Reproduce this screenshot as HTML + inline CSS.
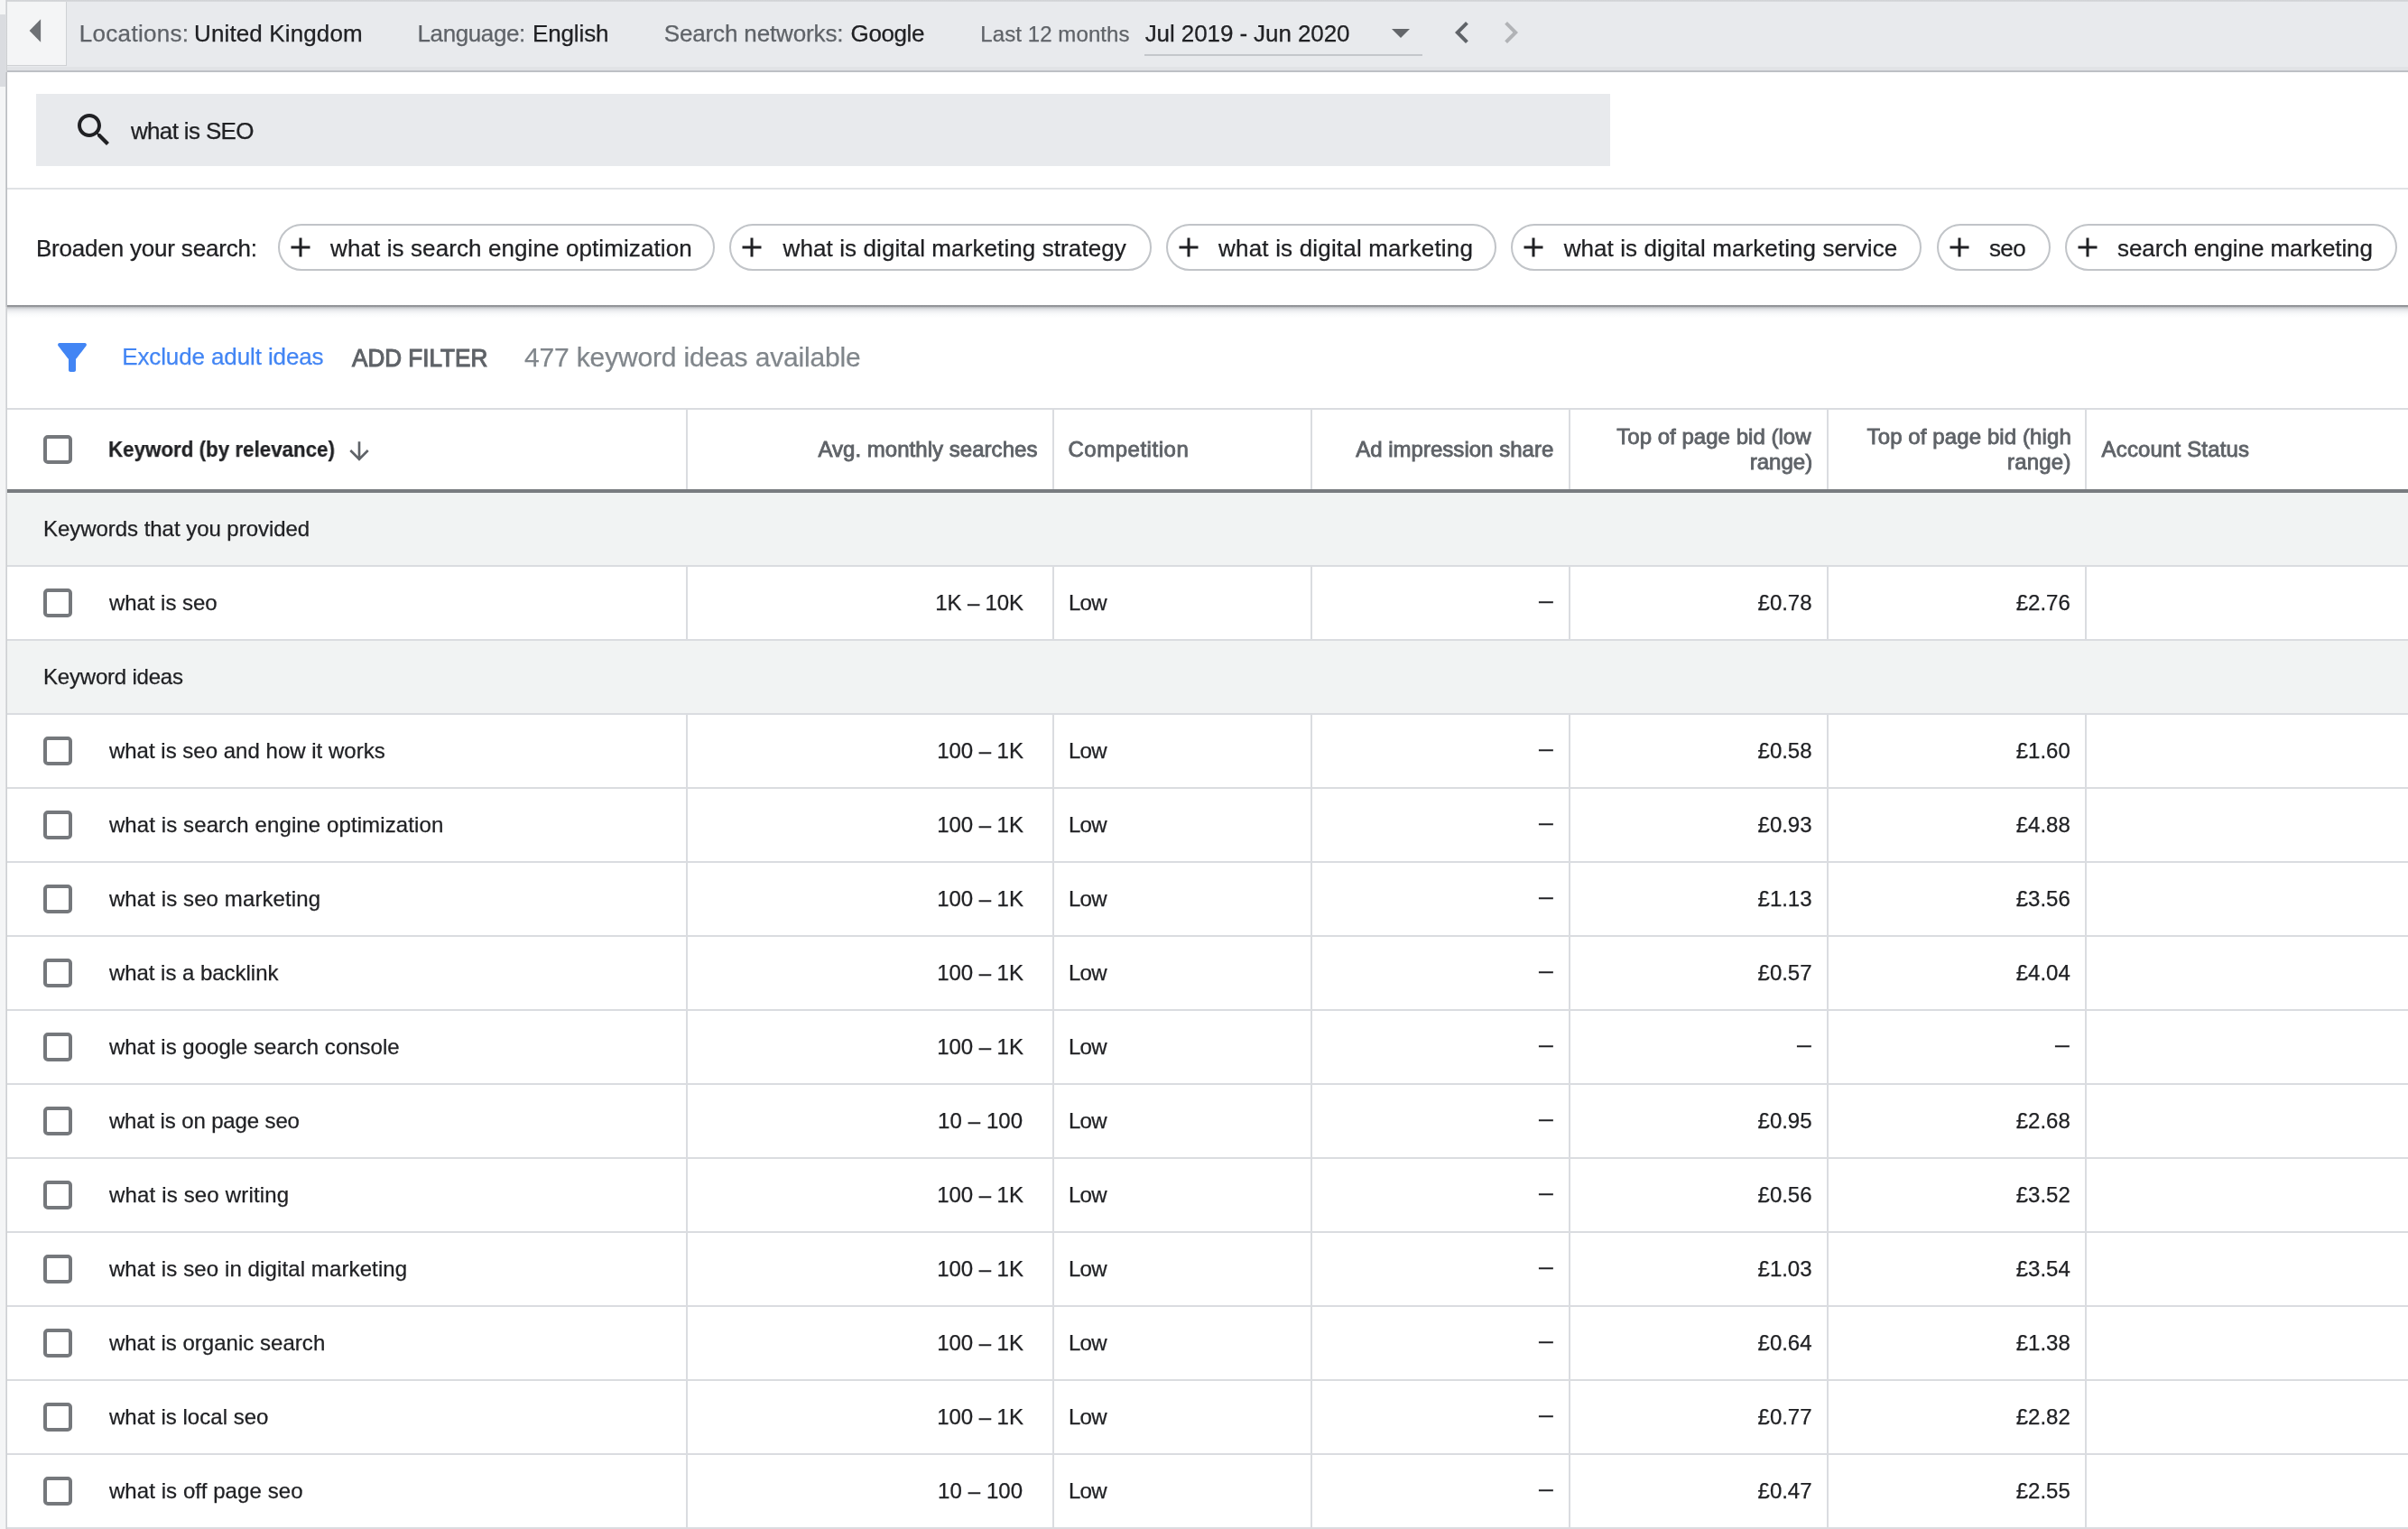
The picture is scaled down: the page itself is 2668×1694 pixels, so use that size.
<!DOCTYPE html>
<html lang="en"><head><meta charset="utf-8"><title>Keyword ideas</title><style>
html,body{margin:0;padding:0;background:#fff}
body{width:2668px;height:1694px;position:relative;overflow:hidden;font-family:"Liberation Sans",Arial,sans-serif}
#app{position:absolute;left:0;top:0;width:2668px;height:1694px;will-change:transform;transform:translateZ(0)}
.t{position:absolute;white-space:pre;-webkit-text-stroke:0.25px currentColor;line-height:1;margin:0;padding:0}
.cb{position:absolute;left:48px;width:32px;height:32px;box-sizing:border-box;border:4px solid #75787c;border-radius:5px;background:#fff}
</style></head><body><div id="app">
<aside class="rail">
<div style="position:absolute;left:0;top:0;width:6px;height:1694px;background:#f4f5f6"></div>
<div style="position:absolute;left:0;top:16px;width:6px;height:80px;background:#dadce0"></div>
<div style="position:absolute;left:6px;top:0;width:2px;height:1694px;background:linear-gradient(90deg,#e3e5e7,#c6c8cb)"></div>
<div style="position:absolute;left:6px;top:80px;width:2px;height:260px;background:linear-gradient(90deg,#d5d7da,#b2b5b9)"></div>
</aside>
<header class="topbar">
<div style="position:absolute;left:8px;top:0;width:2660px;height:78px;background:#e8eaed"></div>
<div style="position:absolute;left:8px;top:0;width:2660px;height:2px;background:linear-gradient(#cfd1d4,#dadcdf)"></div>
<div style="position:absolute;left:8px;top:74px;width:2660px;height:4px;background:#e1e3e6"></div>
<div style="position:absolute;left:8px;top:78px;width:2660px;height:2px;background:#bdc0c5"></div>
<div style="position:absolute;left:8px;top:2px;width:65px;height:70px;background:#f4f5f6;border-right:1px solid #cfd1d4;border-bottom:1px solid #cfd1d4"></div>
<svg style="position:absolute;left:28px;top:16px" width="24" height="36" viewBox="0 0 24 36"><path d="M17.1 5.2 L17.1 30.7 L4.6 18 Z" fill="#6e7175"/></svg>
<div style="position:absolute;left:1268px;top:60px;width:308px;height:2px;background:#c4c7cb"></div>
<svg style="position:absolute;left:1528px;top:12px" width="48" height="48" viewBox="0 0 24 24"><path d="M7 10l5 5 5-5z" fill="#63666a"/></svg>
<svg style="position:absolute;left:1595.8px;top:12.3px" width="48" height="48" viewBox="0 0 24 24"><path d="M15.41 7.41L14 6l-6 6 6 6 1.41-1.41L10.83 12z" fill="#5f6368"/></svg>
<svg style="position:absolute;left:1650.4px;top:12.3px" width="48" height="48" viewBox="0 0 24 24"><path d="M10 6L8.59 7.41 13.17 12l-4.58 4.59L10 18l6-6z" fill="#b1b3b6"/></svg>
<div class="t" style="left:87.80px;top:24px;font-size:26px;color:#5f6368;letter-spacing:0.300px;">Locations:</div>
<div class="t" style="left:215.00px;top:24px;font-size:26px;color:#202124;letter-spacing:0.128px;">United Kingdom</div>
<div class="t" style="left:462.50px;top:24px;font-size:26px;color:#5f6368;letter-spacing:-0.397px;">Language:</div>
<div class="t" style="left:590.00px;top:24px;font-size:26px;color:#202124;letter-spacing:-0.136px;">English</div>
<div class="t" style="left:735.70px;top:24px;font-size:26px;color:#5f6368;letter-spacing:-0.136px;">Search networks:</div>
<div class="t" style="left:942.60px;top:24px;font-size:26px;color:#202124;letter-spacing:-0.396px;">Google</div>
<div class="t" style="left:1086.30px;top:26px;font-size:24px;color:#5f6368;letter-spacing:0.085px;">Last 12 months</div>
<div class="t" style="left:1268.70px;top:24px;font-size:26px;color:#202124;letter-spacing:-0.090px;">Jul 2019 - Jun 2020</div>
</header>
<section class="search-panel">
<div style="position:absolute;left:40px;top:104px;width:1744px;height:80px;background:#e8eaed"></div>
<svg style="position:absolute;left:80px;top:120px" width="48" height="48" viewBox="0 0 24 24"><path fill="#202124" d="M15.5 14h-.79l-.28-.27C15.41 12.59 16 11.11 16 9.5 16 5.91 13.09 3 9.5 3S3 5.91 3 9.5 5.91 16 9.5 16c1.61 0 3.09-.59 4.23-1.57l.27.28v.79l5 4.99L20.49 19l-4.99-5zm-6 0C7.01 14 5 11.99 5 9.5S7.01 5 9.5 5 14 7.01 14 9.5 11.99 14 9.5 14z"/></svg>
<div style="position:absolute;left:8px;top:208px;width:2660px;height:2px;background:#e0e2e5"></div>
<div style="position:absolute;left:308.0px;top:248px;width:483.8px;height:52px;box-sizing:border-box;border:2px solid #c1c4c8;border-radius:26px"></div>
<svg style="position:absolute;left:315.2px;top:256px" width="36" height="36" viewBox="0 0 24 24"><path fill="#202124" d="M19 13h-6v6h-2v-6H5v-2h6V5h2v6h6v2z"/></svg>
<div style="position:absolute;left:808.0px;top:248px;width:467.8px;height:52px;box-sizing:border-box;border:2px solid #c1c4c8;border-radius:26px"></div>
<svg style="position:absolute;left:815.2px;top:256px" width="36" height="36" viewBox="0 0 24 24"><path fill="#202124" d="M19 13h-6v6h-2v-6H5v-2h6V5h2v6h6v2z"/></svg>
<div style="position:absolute;left:1292.0px;top:248px;width:366.1px;height:52px;box-sizing:border-box;border:2px solid #c1c4c8;border-radius:26px"></div>
<svg style="position:absolute;left:1299.2px;top:256px" width="36" height="36" viewBox="0 0 24 24"><path fill="#202124" d="M19 13h-6v6h-2v-6H5v-2h6V5h2v6h6v2z"/></svg>
<div style="position:absolute;left:1673.7px;top:248px;width:455.8px;height:52px;box-sizing:border-box;border:2px solid #c1c4c8;border-radius:26px"></div>
<svg style="position:absolute;left:1680.9px;top:256px" width="36" height="36" viewBox="0 0 24 24"><path fill="#202124" d="M19 13h-6v6h-2v-6H5v-2h6V5h2v6h6v2z"/></svg>
<div style="position:absolute;left:2146.0px;top:248px;width:126.0px;height:52px;box-sizing:border-box;border:2px solid #c1c4c8;border-radius:26px"></div>
<svg style="position:absolute;left:2153.2px;top:256px" width="36" height="36" viewBox="0 0 24 24"><path fill="#202124" d="M19 13h-6v6h-2v-6H5v-2h6V5h2v6h6v2z"/></svg>
<div style="position:absolute;left:2288.1px;top:248px;width:367.6px;height:52px;box-sizing:border-box;border:2px solid #c1c4c8;border-radius:26px"></div>
<svg style="position:absolute;left:2295.3px;top:256px" width="36" height="36" viewBox="0 0 24 24"><path fill="#202124" d="M19 13h-6v6h-2v-6H5v-2h6V5h2v6h6v2z"/></svg>
<div style="position:absolute;left:8px;top:338px;width:2660px;height:14px;background:linear-gradient(#8f9195 0,#94969a 1.6px,#c3c5c8 2.6px,#dfe1e4 4.5px,#eff0f2 7px,#f9fafb 10px,#fff 14px)"></div>
<div class="t" style="left:144.90px;top:132px;font-size:26px;color:#202124;letter-spacing:-0.643px;">what is SEO</div>
<div class="t" style="left:39.90px;top:262px;font-size:26px;color:#202124;letter-spacing:-0.182px;">Broaden your search:</div>
<div class="t" style="left:366.10px;top:262px;font-size:26px;color:#202124;letter-spacing:0.095px;">what is search engine optimization</div>
<div class="t" style="left:867.60px;top:262px;font-size:26px;color:#202124;letter-spacing:0.092px;">what is digital marketing strategy</div>
<div class="t" style="left:1350.10px;top:262px;font-size:26px;color:#202124;letter-spacing:0.179px;">what is digital marketing</div>
<div class="t" style="left:1732.70px;top:262px;font-size:26px;color:#202124;letter-spacing:0.079px;">what is digital marketing service</div>
<div class="t" style="left:2204.00px;top:262px;font-size:26px;color:#202124;letter-spacing:-0.630px;">seo</div>
<div class="t" style="left:2346.00px;top:262px;font-size:26px;color:#202124;letter-spacing:-0.080px;">search engine marketing</div>
</section>
<section class="filter-bar">
<svg style="position:absolute;left:56px;top:372px" width="48" height="48" viewBox="0 0 24 24"><path fill="#4285f4" d="M4.25 5.61C6.27 8.2 10 13 10 13v6c0 .55.45 1 1 1h2c.55 0 1-.45 1-1v-6s3.72-4.8 5.74-7.39A.998.998 0 0 0 18.95 4H5.04c-.83 0-1.3.95-.79 1.61z"/></svg>
<div class="t" style="left:135.20px;top:382px;font-size:26px;color:#4285f4;letter-spacing:-0.116px;">Exclude adult ideas</div>
<div class="t" style="left:390.30px;top:383px;font-size:28px;color:#5f6368;letter-spacing:0.000px;transform:scaleX(0.9316);transform-origin:0 0;-webkit-text-stroke:1.1px #5f6368;">ADD FILTER</div>
<div class="t" style="left:581.00px;top:381px;font-size:30px;color:#80868b;letter-spacing:-0.158px;">477 keyword ideas available</div>
</section>
<main class="keyword-table">
<div style="position:absolute;left:8px;top:452px;width:2660px;height:2px;background:#dadce0"></div>
<div style="position:absolute;left:8px;top:542px;width:2660px;height:4px;background:#797c80"></div>
<div style="position:absolute;left:8px;top:546px;width:2660px;height:80px;background:#f1f3f3"></div>
<div style="position:absolute;left:8px;top:710px;width:2660px;height:80px;background:#f1f3f3"></div>
<div style="position:absolute;left:8px;top:626px;width:2660px;height:2px;background:#dadce0"></div>
<div style="position:absolute;left:8px;top:708px;width:2660px;height:2px;background:#dadce0"></div>
<div style="position:absolute;left:8px;top:790px;width:2660px;height:2px;background:#dadce0"></div>
<div style="position:absolute;left:8px;top:872px;width:2660px;height:2px;background:#dadce0"></div>
<div style="position:absolute;left:8px;top:954px;width:2660px;height:2px;background:#dadce0"></div>
<div style="position:absolute;left:8px;top:1036px;width:2660px;height:2px;background:#dadce0"></div>
<div style="position:absolute;left:8px;top:1118px;width:2660px;height:2px;background:#dadce0"></div>
<div style="position:absolute;left:8px;top:1200px;width:2660px;height:2px;background:#dadce0"></div>
<div style="position:absolute;left:8px;top:1282px;width:2660px;height:2px;background:#dadce0"></div>
<div style="position:absolute;left:8px;top:1364px;width:2660px;height:2px;background:#dadce0"></div>
<div style="position:absolute;left:8px;top:1446px;width:2660px;height:2px;background:#dadce0"></div>
<div style="position:absolute;left:8px;top:1528px;width:2660px;height:2px;background:#dadce0"></div>
<div style="position:absolute;left:8px;top:1610px;width:2660px;height:2px;background:#dadce0"></div>
<div style="position:absolute;left:8px;top:1692px;width:2660px;height:2px;background:#dadce0"></div>
<div style="position:absolute;left:760px;top:454px;width:2px;height:88px;background:#dadce0"></div>
<div style="position:absolute;left:760px;top:628px;width:2px;height:80px;background:#dadce0"></div>
<div style="position:absolute;left:760px;top:792px;width:2px;height:902px;background:#dadce0"></div>
<div style="position:absolute;left:1166px;top:454px;width:2px;height:88px;background:#dadce0"></div>
<div style="position:absolute;left:1166px;top:628px;width:2px;height:80px;background:#dadce0"></div>
<div style="position:absolute;left:1166px;top:792px;width:2px;height:902px;background:#dadce0"></div>
<div style="position:absolute;left:1452px;top:454px;width:2px;height:88px;background:#dadce0"></div>
<div style="position:absolute;left:1452px;top:628px;width:2px;height:80px;background:#dadce0"></div>
<div style="position:absolute;left:1452px;top:792px;width:2px;height:902px;background:#dadce0"></div>
<div style="position:absolute;left:1738px;top:454px;width:2px;height:88px;background:#dadce0"></div>
<div style="position:absolute;left:1738px;top:628px;width:2px;height:80px;background:#dadce0"></div>
<div style="position:absolute;left:1738px;top:792px;width:2px;height:902px;background:#dadce0"></div>
<div style="position:absolute;left:2024px;top:454px;width:2px;height:88px;background:#dadce0"></div>
<div style="position:absolute;left:2024px;top:628px;width:2px;height:80px;background:#dadce0"></div>
<div style="position:absolute;left:2024px;top:792px;width:2px;height:902px;background:#dadce0"></div>
<div style="position:absolute;left:2310px;top:454px;width:2px;height:88px;background:#dadce0"></div>
<div style="position:absolute;left:2310px;top:628px;width:2px;height:80px;background:#dadce0"></div>
<div style="position:absolute;left:2310px;top:792px;width:2px;height:902px;background:#dadce0"></div>
<svg style="position:absolute;left:382px;top:483.6px" width="32" height="32" viewBox="0 0 24 24"><path d="M20 12l-1.41-1.41L13 16.17V4h-2v12.17l-5.58-5.59L4 12l8 8 8-8z" fill="#5f6368"/></svg>
<div class="cb" style="top:482px"></div>
<div class="cb" style="top:652px"></div>
<div class="cb" style="top:816px"></div>
<div class="cb" style="top:898px"></div>
<div class="cb" style="top:980px"></div>
<div class="cb" style="top:1062px"></div>
<div class="cb" style="top:1144px"></div>
<div class="cb" style="top:1226px"></div>
<div class="cb" style="top:1308px"></div>
<div class="cb" style="top:1390px"></div>
<div class="cb" style="top:1472px"></div>
<div class="cb" style="top:1554px"></div>
<div class="cb" style="top:1636px"></div>
<div class="t" style="left:120.47px;top:486px;font-size:24px;color:#202124;letter-spacing:0.000px;font-weight:700;transform:scaleX(0.9314);transform-origin:0 0;">Keyword (by relevance)</div>
<div class="t" style="left:906.40px;top:486px;font-size:24px;color:#5f6368;letter-spacing:0.033px;-webkit-text-stroke:0.85px #5f6368;">Avg. monthly searches</div>
<div class="t" style="left:1183.40px;top:486px;font-size:24px;color:#5f6368;letter-spacing:0.529px;-webkit-text-stroke:0.85px #5f6368;">Competition</div>
<div class="t" style="left:1502.20px;top:486px;font-size:24px;color:#5f6368;letter-spacing:0.016px;-webkit-text-stroke:0.85px #5f6368;">Ad impression share</div>
<div class="t" style="left:1791.30px;top:472px;font-size:24px;color:#5f6368;letter-spacing:0.022px;-webkit-text-stroke:0.85px #5f6368;">Top of page bid (low</div>
<div class="t" style="left:1938.70px;top:500px;font-size:24px;color:#5f6368;letter-spacing:0.023px;-webkit-text-stroke:0.85px #5f6368;">range)</div>
<div class="t" style="left:2068.60px;top:472px;font-size:24px;color:#5f6368;letter-spacing:0.099px;-webkit-text-stroke:0.85px #5f6368;">Top of page bid (high</div>
<div class="t" style="left:2224.00px;top:500px;font-size:24px;color:#5f6368;letter-spacing:0.203px;-webkit-text-stroke:0.85px #5f6368;">range)</div>
<div class="t" style="left:2328.60px;top:486px;font-size:24px;color:#5f6368;letter-spacing:0.152px;-webkit-text-stroke:0.85px #5f6368;">Account Status</div>
<div class="t" style="left:48.00px;top:574px;font-size:24px;color:#202124;letter-spacing:-0.041px;">Keywords that you provided</div>
<div class="t" style="left:48.00px;top:738px;font-size:24px;color:#202124;letter-spacing:-0.201px;">Keyword ideas</div>
<div class="t" style="left:120.90px;top:656px;font-size:24px;color:#202124;letter-spacing:-0.031px;">what is seo</div>
<div class="t" style="left:1036.30px;top:656px;font-size:24px;color:#202124;letter-spacing:-0.148px;">1K – 10K</div>
<div class="t" style="left:1183.90px;top:656px;font-size:24px;color:#202124;letter-spacing:-0.648px;">Low</div>
<div class="t" style="left:1704.50px;top:653px;font-size:24px;color:#202124;letter-spacing:0.000px;transform:scaleX(0.6583);transform-origin:0 0;">—</div>
<div class="t" style="left:1947.60px;top:656px;font-size:24px;color:#202124;letter-spacing:-0.028px;">£0.78</div>
<div class="t" style="left:2233.80px;top:656px;font-size:24px;color:#202124;letter-spacing:-0.028px;">£2.76</div>
<div class="t" style="left:120.90px;top:820px;font-size:24px;color:#202124;letter-spacing:0.012px;">what is seo and how it works</div>
<div class="t" style="left:1038.20px;top:820px;font-size:24px;color:#202124;letter-spacing:-0.053px;">100 – 1K</div>
<div class="t" style="left:1183.90px;top:820px;font-size:24px;color:#202124;letter-spacing:-0.648px;">Low</div>
<div class="t" style="left:1704.50px;top:817px;font-size:24px;color:#202124;letter-spacing:0.000px;transform:scaleX(0.6583);transform-origin:0 0;">—</div>
<div class="t" style="left:1947.60px;top:820px;font-size:24px;color:#202124;letter-spacing:-0.028px;">£0.58</div>
<div class="t" style="left:2233.80px;top:820px;font-size:24px;color:#202124;letter-spacing:-0.028px;">£1.60</div>
<div class="t" style="left:120.90px;top:902px;font-size:24px;color:#202124;letter-spacing:0.105px;">what is search engine optimization</div>
<div class="t" style="left:1038.20px;top:902px;font-size:24px;color:#202124;letter-spacing:-0.053px;">100 – 1K</div>
<div class="t" style="left:1183.90px;top:902px;font-size:24px;color:#202124;letter-spacing:-0.648px;">Low</div>
<div class="t" style="left:1704.50px;top:899px;font-size:24px;color:#202124;letter-spacing:0.000px;transform:scaleX(0.6583);transform-origin:0 0;">—</div>
<div class="t" style="left:1947.60px;top:902px;font-size:24px;color:#202124;letter-spacing:-0.028px;">£0.93</div>
<div class="t" style="left:2233.80px;top:902px;font-size:24px;color:#202124;letter-spacing:-0.028px;">£4.88</div>
<div class="t" style="left:120.90px;top:984px;font-size:24px;color:#202124;letter-spacing:0.102px;">what is seo marketing</div>
<div class="t" style="left:1038.20px;top:984px;font-size:24px;color:#202124;letter-spacing:-0.053px;">100 – 1K</div>
<div class="t" style="left:1183.90px;top:984px;font-size:24px;color:#202124;letter-spacing:-0.648px;">Low</div>
<div class="t" style="left:1704.50px;top:981px;font-size:24px;color:#202124;letter-spacing:0.000px;transform:scaleX(0.6583);transform-origin:0 0;">—</div>
<div class="t" style="left:1947.60px;top:984px;font-size:24px;color:#202124;letter-spacing:-0.028px;">£1.13</div>
<div class="t" style="left:2233.80px;top:984px;font-size:24px;color:#202124;letter-spacing:-0.028px;">£3.56</div>
<div class="t" style="left:120.90px;top:1066px;font-size:24px;color:#202124;letter-spacing:-0.029px;">what is a backlink</div>
<div class="t" style="left:1038.20px;top:1066px;font-size:24px;color:#202124;letter-spacing:-0.053px;">100 – 1K</div>
<div class="t" style="left:1183.90px;top:1066px;font-size:24px;color:#202124;letter-spacing:-0.648px;">Low</div>
<div class="t" style="left:1704.50px;top:1063px;font-size:24px;color:#202124;letter-spacing:0.000px;transform:scaleX(0.6583);transform-origin:0 0;">—</div>
<div class="t" style="left:1947.60px;top:1066px;font-size:24px;color:#202124;letter-spacing:-0.028px;">£0.57</div>
<div class="t" style="left:2233.80px;top:1066px;font-size:24px;color:#202124;letter-spacing:-0.028px;">£4.04</div>
<div class="t" style="left:120.90px;top:1148px;font-size:24px;color:#202124;letter-spacing:0.008px;">what is google search console</div>
<div class="t" style="left:1038.20px;top:1148px;font-size:24px;color:#202124;letter-spacing:-0.053px;">100 – 1K</div>
<div class="t" style="left:1183.90px;top:1148px;font-size:24px;color:#202124;letter-spacing:-0.648px;">Low</div>
<div class="t" style="left:1704.50px;top:1145px;font-size:24px;color:#202124;letter-spacing:0.000px;transform:scaleX(0.6583);transform-origin:0 0;">—</div>
<div class="t" style="left:1990.90px;top:1145px;font-size:24px;color:#202124;letter-spacing:0.000px;transform:scaleX(0.6583);transform-origin:0 0;">—</div>
<div class="t" style="left:2277.10px;top:1145px;font-size:24px;color:#202124;letter-spacing:0.000px;transform:scaleX(0.6583);transform-origin:0 0;">—</div>
<div class="t" style="left:120.90px;top:1230px;font-size:24px;color:#202124;letter-spacing:-0.135px;">what is on page seo</div>
<div class="t" style="left:1039.10px;top:1230px;font-size:24px;color:#202124;letter-spacing:0.089px;">10 – 100</div>
<div class="t" style="left:1183.90px;top:1230px;font-size:24px;color:#202124;letter-spacing:-0.648px;">Low</div>
<div class="t" style="left:1704.50px;top:1227px;font-size:24px;color:#202124;letter-spacing:0.000px;transform:scaleX(0.6583);transform-origin:0 0;">—</div>
<div class="t" style="left:1947.60px;top:1230px;font-size:24px;color:#202124;letter-spacing:-0.028px;">£0.95</div>
<div class="t" style="left:2233.80px;top:1230px;font-size:24px;color:#202124;letter-spacing:-0.028px;">£2.68</div>
<div class="t" style="left:120.90px;top:1312px;font-size:24px;color:#202124;letter-spacing:0.176px;">what is seo writing</div>
<div class="t" style="left:1038.20px;top:1312px;font-size:24px;color:#202124;letter-spacing:-0.053px;">100 – 1K</div>
<div class="t" style="left:1183.90px;top:1312px;font-size:24px;color:#202124;letter-spacing:-0.648px;">Low</div>
<div class="t" style="left:1704.50px;top:1309px;font-size:24px;color:#202124;letter-spacing:0.000px;transform:scaleX(0.6583);transform-origin:0 0;">—</div>
<div class="t" style="left:1947.60px;top:1312px;font-size:24px;color:#202124;letter-spacing:-0.028px;">£0.56</div>
<div class="t" style="left:2233.80px;top:1312px;font-size:24px;color:#202124;letter-spacing:-0.028px;">£3.52</div>
<div class="t" style="left:120.90px;top:1394px;font-size:24px;color:#202124;letter-spacing:0.110px;">what is seo in digital marketing</div>
<div class="t" style="left:1038.20px;top:1394px;font-size:24px;color:#202124;letter-spacing:-0.053px;">100 – 1K</div>
<div class="t" style="left:1183.90px;top:1394px;font-size:24px;color:#202124;letter-spacing:-0.648px;">Low</div>
<div class="t" style="left:1704.50px;top:1391px;font-size:24px;color:#202124;letter-spacing:0.000px;transform:scaleX(0.6583);transform-origin:0 0;">—</div>
<div class="t" style="left:1947.60px;top:1394px;font-size:24px;color:#202124;letter-spacing:-0.028px;">£1.03</div>
<div class="t" style="left:2233.80px;top:1394px;font-size:24px;color:#202124;letter-spacing:-0.028px;">£3.54</div>
<div class="t" style="left:120.90px;top:1476px;font-size:24px;color:#202124;letter-spacing:0.027px;">what is organic search</div>
<div class="t" style="left:1038.20px;top:1476px;font-size:24px;color:#202124;letter-spacing:-0.053px;">100 – 1K</div>
<div class="t" style="left:1183.90px;top:1476px;font-size:24px;color:#202124;letter-spacing:-0.648px;">Low</div>
<div class="t" style="left:1704.50px;top:1473px;font-size:24px;color:#202124;letter-spacing:0.000px;transform:scaleX(0.6583);transform-origin:0 0;">—</div>
<div class="t" style="left:1947.60px;top:1476px;font-size:24px;color:#202124;letter-spacing:-0.028px;">£0.64</div>
<div class="t" style="left:2233.80px;top:1476px;font-size:24px;color:#202124;letter-spacing:-0.028px;">£1.38</div>
<div class="t" style="left:120.90px;top:1558px;font-size:24px;color:#202124;letter-spacing:0.029px;">what is local seo</div>
<div class="t" style="left:1038.20px;top:1558px;font-size:24px;color:#202124;letter-spacing:-0.053px;">100 – 1K</div>
<div class="t" style="left:1183.90px;top:1558px;font-size:24px;color:#202124;letter-spacing:-0.648px;">Low</div>
<div class="t" style="left:1704.50px;top:1555px;font-size:24px;color:#202124;letter-spacing:0.000px;transform:scaleX(0.6583);transform-origin:0 0;">—</div>
<div class="t" style="left:1947.60px;top:1558px;font-size:24px;color:#202124;letter-spacing:-0.028px;">£0.77</div>
<div class="t" style="left:2233.80px;top:1558px;font-size:24px;color:#202124;letter-spacing:-0.028px;">£2.82</div>
<div class="t" style="left:120.90px;top:1640px;font-size:24px;color:#202124;letter-spacing:0.085px;">what is off page seo</div>
<div class="t" style="left:1039.10px;top:1640px;font-size:24px;color:#202124;letter-spacing:0.089px;">10 – 100</div>
<div class="t" style="left:1183.90px;top:1640px;font-size:24px;color:#202124;letter-spacing:-0.648px;">Low</div>
<div class="t" style="left:1704.50px;top:1637px;font-size:24px;color:#202124;letter-spacing:0.000px;transform:scaleX(0.6583);transform-origin:0 0;">—</div>
<div class="t" style="left:1947.60px;top:1640px;font-size:24px;color:#202124;letter-spacing:-0.028px;">£0.47</div>
<div class="t" style="left:2233.80px;top:1640px;font-size:24px;color:#202124;letter-spacing:-0.028px;">£2.55</div>
</main>
</div></body></html>
